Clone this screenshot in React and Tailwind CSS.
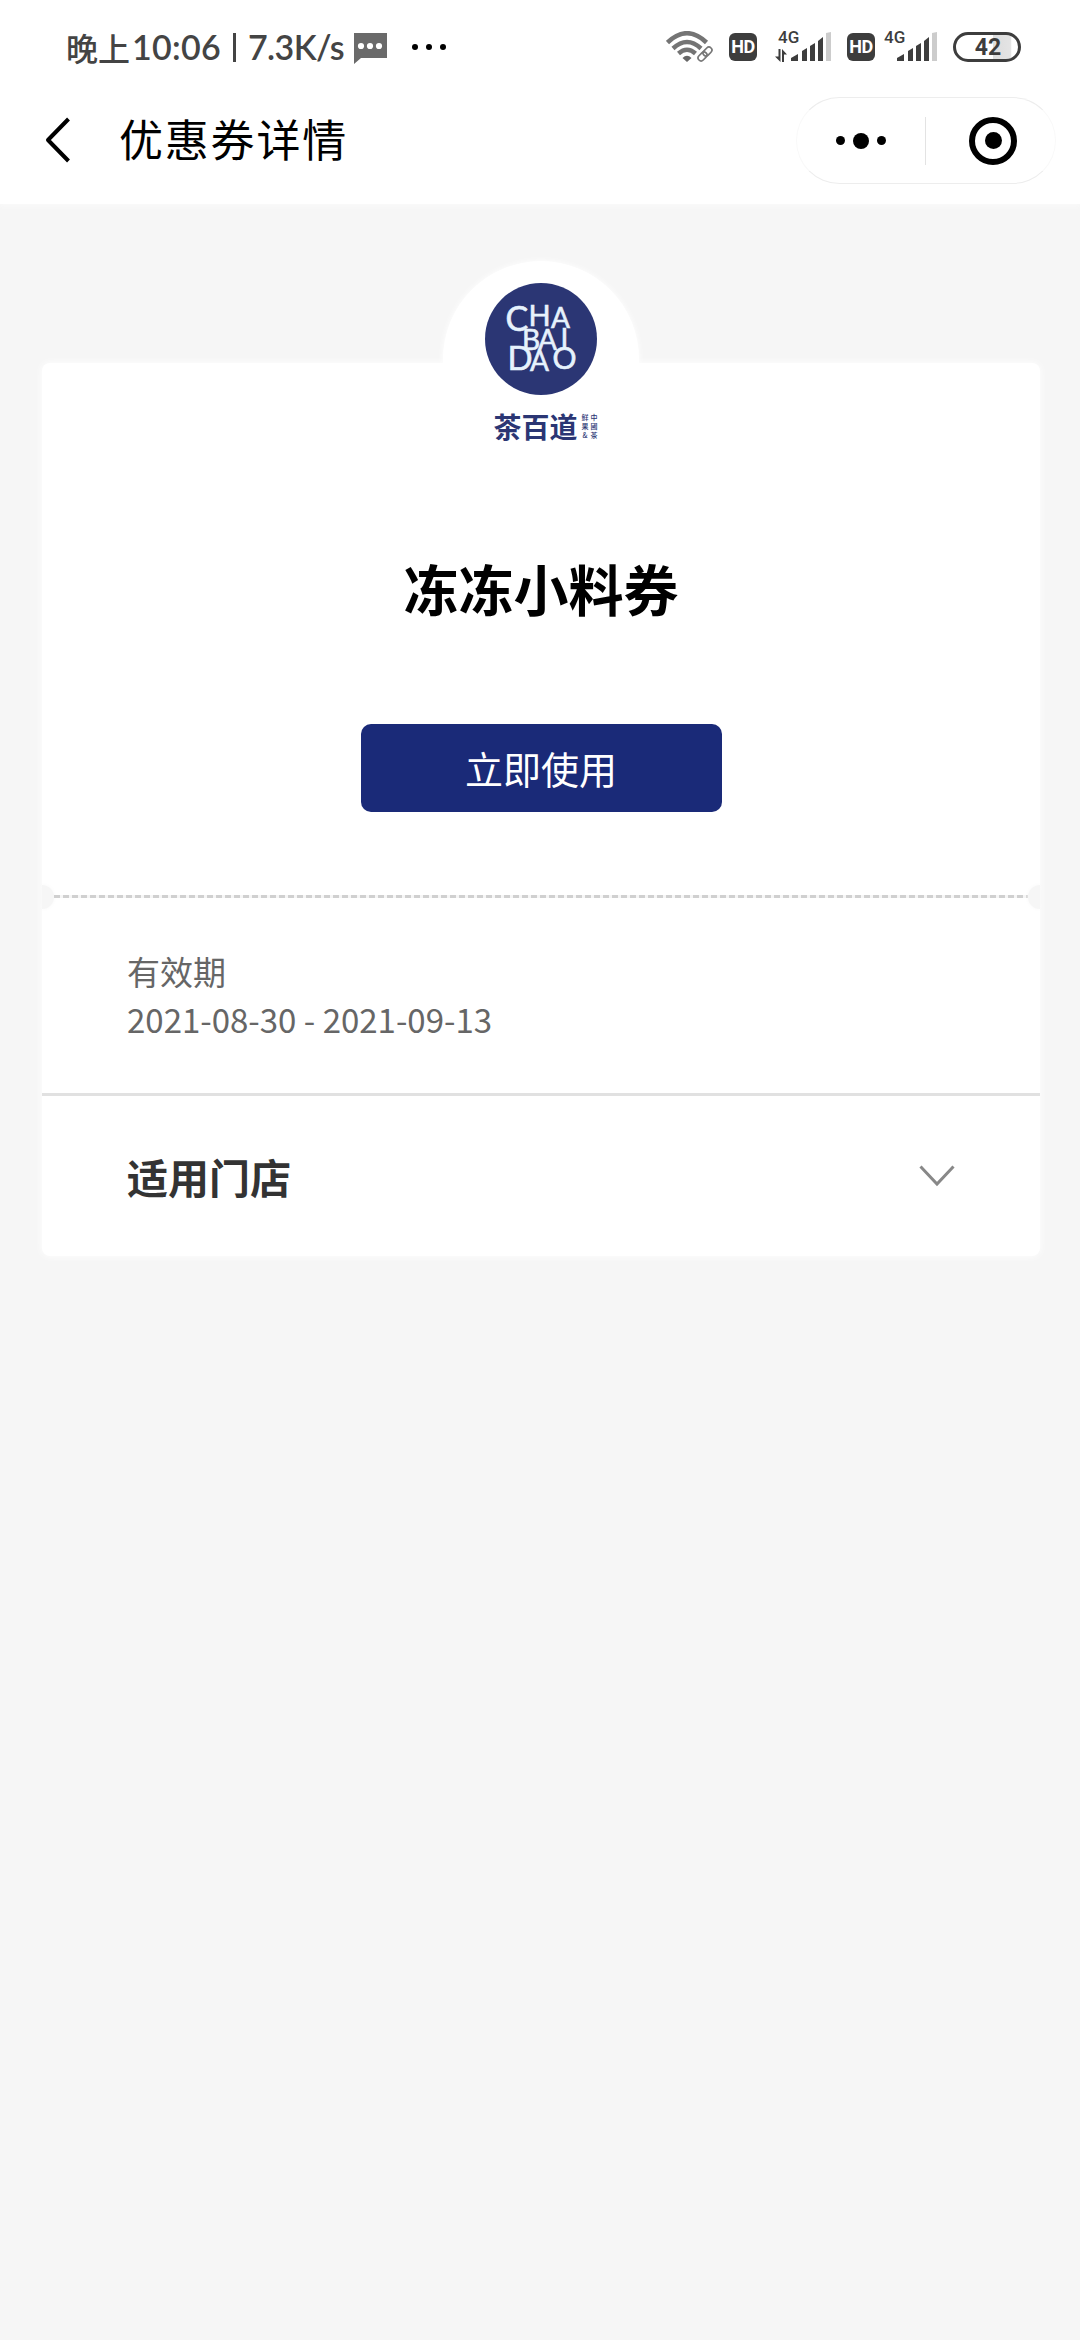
import React, { useState } from 'react';

const SignalBars = () => (
  <svg className="w-10 h-[30px]" viewBox="0 0 40 30" fill="#3d3d3d">
    <path d="M0 29v-3l7-4v7z" />
    <path d="M11 29V19l5-3v13z" />
    <path d="M19 29V14l5-3v18z" />
    <path d="M27 29V9l5-4v24z" />
    <path d="M35 29V1l5-1v29z" fill="#cccccc" />
  </svg>
);

const HdBadge = () => (
  <span className="flex h-7 w-7 items-center justify-center rounded-md bg-[#3d3d3d] font-['Roboto',sans-serif] text-[18px] leading-none font-bold tracking-[-0.5px] text-white">
    HD
  </span>
);

const StatusBar = () => (
  <div className="flex h-[94px] items-center justify-between pl-[66px] pr-[59px]">
    <div className="flex items-center text-[#444]">
      <span className="w-[66px] text-[32px] leading-none font-medium">晚上</span>
      <span className="w-[93px] font-['Lato',sans-serif] text-[34px] leading-none font-semibold tracking-[0.3px] whitespace-nowrap">10:06</span>
      <span className="ml-[8px] mr-[11px] h-[29px] w-[3px] bg-[#444]" />
      <span className="w-[107px] pl-[1px] font-['Lato',sans-serif] text-[34px] leading-none font-semibold tracking-[-0.6px] whitespace-nowrap">7.3K/s</span>
      <svg className="mt-[2px] h-[31px] w-[33px] shrink-0" viewBox="0 0 33 31">
        <path d="M0 0h33v25H7l-7 6z" fill="#6a6a6a" />
        <circle cx="7" cy="13" r="3.1" fill="#fff" />
        <circle cx="16" cy="13" r="3.1" fill="#fff" />
        <circle cx="25" cy="13" r="3.1" fill="#fff" />
      </svg>
      <div className="ml-[25px] flex gap-2">
        <span className="h-[6px] w-[6px] rounded-full bg-black" />
        <span className="h-[6px] w-[6px] rounded-full bg-black" />
        <span className="h-[6px] w-[6px] rounded-full bg-black" />
      </div>
    </div>

    <div className="flex items-center">
      {/* Wifi with link mark */}
      <svg className="h-[32px] w-[48px]" viewBox="0 0 48 32" fill="none">
        <path d="M1.500 11.500Q21 -7 40.500 11.500" stroke="#747474" strokeWidth="4.500" />
        <path d="M7 17.500Q21 4.500 35 17.500" stroke="#747474" strokeWidth="4.500" />
        <path d="M12.500 22.500Q21 15 29.500 22.500" stroke="#747474" strokeWidth="4.500" />
        <path d="M16.500 27Q21 22.500 25.500 27L21 31z" fill="#666" />
        <g transform="rotate(-45 39 23)" stroke="#777" strokeWidth="1.700">
          <rect x="30.500" y="20" width="10" height="6" rx="3" />
          <rect x="37.500" y="20" width="10" height="6" rx="3" />
        </g>
      </svg>
      <div className="ml-[15px]"><HdBadge /></div>
      <div className="relative ml-[34px]">
        <span className="absolute -left-[13px] -top-[3px] font-['Roboto',sans-serif] text-[17px] leading-none font-medium text-[#3d3d3d]">4G</span>
        <svg className="absolute -left-4 top-[17px] h-[13px] w-3" viewBox="0 0 12 13" fill="#3d3d3d">
          <path d="M3.500 0h2v13L0 7.500h3.500z" />
          <path d="M7 0l5 5.500H9V13H7z" />
        </svg>
        <SignalBars />
      </div>
      <div className="ml-4"><HdBadge /></div>
      <div className="relative ml-[22px]">
        <span className="absolute -left-[13px] -top-[3px] font-['Roboto',sans-serif] text-[17px] leading-none font-medium text-[#3d3d3d]">4G</span>
        <SignalBars />
      </div>
      <div className="ml-4 flex h-[30px] w-[68px] items-center justify-center rounded-full border-[3px] border-[#3d3d3d] bg-[linear-gradient(90deg,#fff_60%,#ddd_60%,#e4e4e4_88%,#fff_90%)] bg-clip-padding pl-[2px] font-['Roboto',sans-serif] text-[23px] leading-none font-bold text-[#3d3d3d]">
        42
      </div>
    </div>
  </div>
);

const NavBar = () => (
  <div className="flex h-[110px] items-start pl-[45px] pr-[24px]">
    <svg className="mt-[23px] h-[46px] w-[26px]" viewBox="0 0 26 46" fill="none" stroke="#000" strokeWidth="4">
      <path d="M23.500 2L3 23L23.500 44" strokeLinejoin="round" />
    </svg>
    <h1 className="ml-[48px] mt-[16px] text-[44px] leading-[56px] font-normal tracking-[1.800px] text-black">优惠券详情</h1>
    <div className="ml-auto mt-[3px] flex h-[87px] w-[260px] items-center rounded-full border border-x-[#f9f9f9] border-y-[#ededed]">
      <button className="flex h-full w-[128px] items-center justify-center gap-[8px]">
        <span className="h-[9px] w-[9px] rounded-full bg-black" />
        <span className="h-4 w-4 rounded-full bg-black" />
        <span className="h-[9px] w-[9px] rounded-full bg-black" />
      </button>
      <span className="h-12 w-px bg-[#e3e3e3]" />
      <button className="flex flex-1 items-center justify-center pl-[5px]">
        <span className="flex h-12 w-12 items-center justify-center rounded-full border-[6px] border-black">
          <span className="h-[17px] w-[17px] rounded-full bg-black" />
        </span>
      </button>
    </div>
  </div>
);

const Logo = () => (
  <div className="absolute left-1/2 -top-[102px] flex h-[196px] w-[196px] -translate-x-1/2 flex-col items-center rounded-full bg-white pt-[22px] shadow-[0_0_6px_#fff]">
    <svg
      className="h-[112px] w-[112px] shrink-0"
      viewBox="485 283 112 112"
      fontFamily="Lato, sans-serif"
      fill="#e6f2fc"
      stroke="#e6f2fc"
      strokeWidth="0.600"
    >
      <circle cx="541" cy="339" r="56" fill="#2b3674" stroke="none" />
      <text x="505.500" y="331" fontSize="34">C</text>
      <text x="528.500" y="326" fontSize="29">H</text>
      <text x="551" y="328" fontSize="28">A</text>
      <text x="522" y="350" fontSize="28">B</text>
      <text x="538" y="350" fontSize="28">A</text>
      <text x="560.500" y="349" fontSize="28">I</text>
      <text x="507.500" y="370" fontSize="33">D</text>
      <text x="530" y="371" fontSize="28">A</text>
      <text x="552.500" y="369" fontSize="30">O</text>
    </svg>
    <div className="mt-[15px] ml-[9px] flex items-center gap-1 text-[#2b3674]">
      <span className="text-[28px] leading-[32px] font-bold whitespace-nowrap">茶百道</span>
      <span className="flex gap-[2px] text-[7px] leading-[9px] font-medium">
        <span className="flex flex-col items-center"><i className="not-italic">鲜</i><i className="not-italic">果</i><i className="not-italic">&amp;</i></span>
        <span className="flex flex-col items-center"><i className="not-italic">中</i><i className="not-italic">國</i><i className="not-italic">茶</i></span>
      </span>
    </div>
  </div>
);

const App = () => {
  const [open, setOpen] = useState(false);

  return (
    <div className="min-h-[2340px] w-[1080px] bg-[#f6f6f6] font-['Noto_Sans_CJK_SC',sans-serif]">
      <header className="bg-white shadow-[0_2px_4px_#fafafa]">
        <StatusBar />
        <NavBar />
      </header>

      <main className="relative ml-[42px] mt-[159px] w-[998px] rounded-lg bg-white shadow-[0_0_8px_#fff]">
        <Logo />

        {/* Coupon */}
        <section className="flex h-[532px] flex-col items-center pt-[184px]">
          <h2 className="text-[55px] leading-[80px] font-bold text-black">冻冻小料券</h2>
          <button className="mt-[97px] h-[88px] w-[361px] rounded-[10px] bg-[#1a2a78] text-[38px] leading-[88px] text-white">立即使用</button>
        </section>

        {/* Tear line */}
        <div className="flex h-[3px] items-center justify-between">
          <span className="h-6 w-[12px] shrink-0 rounded-r-full bg-[#f6f6f6] shadow-[0_0_4px_#f8f8f8]" />
          <span className="h-[3px] flex-1 bg-[repeating-linear-gradient(90deg,#d0d0d0_0_6px,#f6f6f6_6px_9px)]" />
          <span className="h-6 w-[12px] shrink-0 rounded-l-full bg-[#f6f6f6] shadow-[0_0_4px_#f8f8f8]" />
        </div>

        <section className="h-[198px] border-b-[3px] border-[#e1e1e1] pl-[85px] pt-[49px] text-[33px] leading-[48px] text-[#666]">
          <p>有效期</p>
          <p>2021-08-30 - 2021-09-13</p>
        </section>

        <button className="flex h-[160px] w-full items-center justify-between pl-[85px] pr-[85px]" onClick={() => setOpen(!open)}>
          <span className="text-[41px] leading-[60px] font-bold text-[#333]">适用门店</span>
          <svg className="h-[22px] w-[36px]" viewBox="0 0 36 22" fill="none" stroke="#888" strokeWidth="3">
            <path d="M1.500 1.500L18 19L34.500 1.500" />
          </svg>
        </button>
      </main>
    </div>
  );
};

export default App;
